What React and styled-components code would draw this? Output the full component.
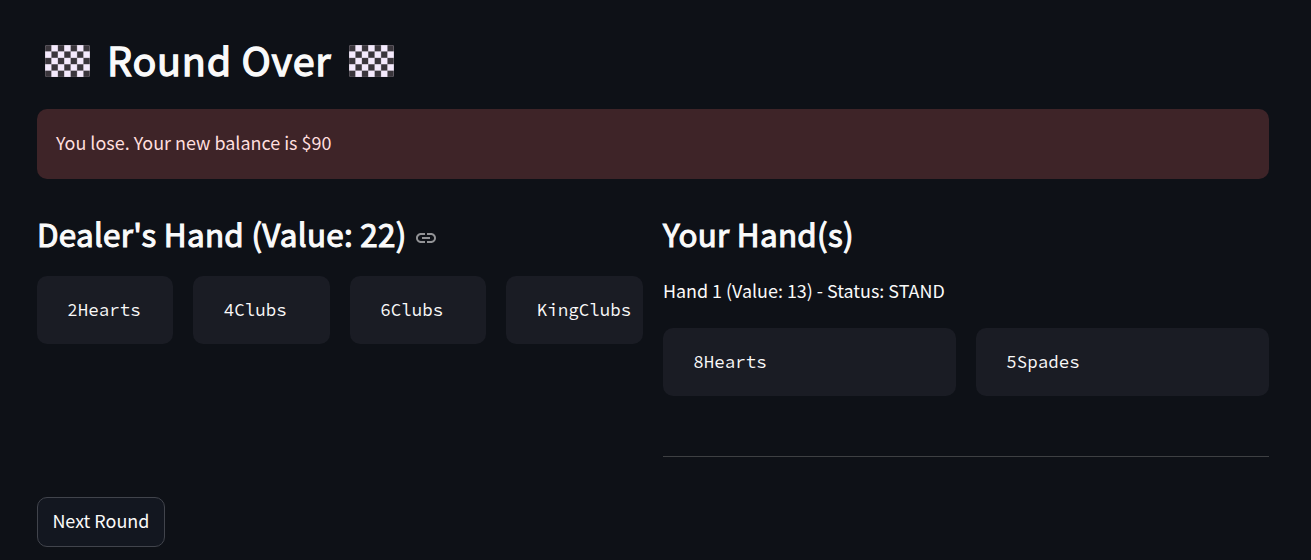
import React from "react";
import styled, { createGlobalStyle } from "styled-components";

const GlobalStyle = createGlobalStyle`
  * { box-sizing: border-box; }
  body {
    margin: 0;
    background: #0e1117;
    color: #fafafa;
    font-family: "Source Sans Pro", "Noto Sans CJK SC", "Noto Sans", sans-serif;
  }
`;

const Page = styled.main`
  width: 1311px;
  height: 560px;
  padding: 36px 42px 0 36.9px;
  overflow: hidden;
`;

const Title = styled.h1`
  display: flex;
  align-items: center;
  height: 53px;
  margin: 0 0 20px;
  padding-left: 8.1px;
  font-size: 39.5px;
  font-weight: 400;
  letter-spacing: 0.75px;
  -webkit-text-stroke: 1.3px currentColor;
  line-height: 53px;
  white-space: nowrap;
`;

const TitleText = styled.span`
  width: 225px;
  margin: -8px 17px 0 17px;
`;

const FlagSvg = styled.svg`
  flex: none;
  width: 45px;
  height: 32px;
  margin-top: -3px;
  border-radius: 2px;
`;

const Alert = styled.div`
  height: 70px;
  padding: 17px 19px;
  border-radius: 10px;
  background: #3e2428;
  color: #ffdede;
  font-size: 17.95px;
  line-height: 32px;
`;

const Columns = styled.div`
  display: grid;
  grid-template-columns: 1fr 1fr;
  gap: 20px;
  height: 278px;
  margin-top: 40px;
`;

const Heading = styled.h2`
  display: flex;
  align-items: center;
  height: 37px;
  margin: 0 0 20px;
  font-size: 31.4px;
  font-weight: 400;
  letter-spacing: 0.28px;
  -webkit-text-stroke: 1.1px currentColor;
  line-height: 37px;
  white-space: nowrap;
`;

const HeadingText = styled.span`
  margin-top: -8px;
`;

const LinkSvg = styled.svg`
  flex: none;
  width: 24px;
  height: 24px;
  margin: 1px 0 0 7px;
`;

const Status = styled.p`
  margin: -2px 0 22px;
  font-size: 17.92px;
  line-height: 32px;
`;

const Cards = styled.div`
  display: grid;
  grid-template-columns: repeat(${(p) => p.$count}, minmax(0, 1fr));
  gap: 20px;
`;

const Card = styled.pre`
  height: 68px;
  margin: 0;
  padding: 20px 0 0 30.4px;
  border-radius: 10px;
  background: #1a1c24;
  font-family: "Source Code Pro", "Noto Sans Mono CJK SC", "Liberation Mono", monospace;
  font-size: 17.5px;
  line-height: 28px;
  white-space: pre;
`;

const Divider = styled.hr`
  height: 1px;
  margin: 60px 0 0;
  border: 0;
  background: #3e4043;
`;

const NextButton = styled.button`
  display: flex;
  align-items: center;
  justify-content: center;
  width: 128px;
  height: 50px;
  padding: 0 0 4px;
  border: 1px solid #41444c;
  border-radius: 10px;
  background: #131720;
  color: #fafafa;
  font-family: inherit;
  font-size: 17.95px;
  white-space: nowrap;
`;

const columns = [0, 1, 2, 3, 4, 5, 6];
const rows = [0, 1, 2, 3, 4];

function Flag() {
  return (
    <FlagSvg viewBox="0 0 45 32">
      <rect width="45" height="32" fill="#a8a1ac" />
      {rows.map((y) =>
        columns.map((x) => (
          <rect
            key={`${x}-${y}`}
            x={x * 6.4 + 0.25}
            y={y * 6.4 + 0.25}
            width="6"
            height="6"
            fill={(x + y) % 2 ? "#f4eafd" : "#3a363c"}
          />
        ))
      )}
    </FlagSvg>
  );
}

function LinkIcon() {
  return (
    <LinkSvg viewBox="0 0 24 24" fill="#929396">
      <path d="M3.9 12c0-1.71 1.39-3.1 3.1-3.1h4V7H7c-2.76 0-5 2.24-5 5s2.24 5 5 5h4v-1.9H7c-1.71 0-3.1-1.39-3.1-3.1zM8 13h8v-2H8v2zm9-6h-4v1.9h4c1.71 0 3.1 1.39 3.1 3.1s-1.39 3.1-3.1 3.1h-4V17h4c2.76 0 5-2.24 5-5s-2.24-5-5-5z" />
    </LinkSvg>
  );
}

function Hand({ cards }) {
  return (
    <Cards $count={cards.length}>
      {cards.map((card) => (
        <Card key={card}>{card}</Card>
      ))}
    </Cards>
  );
}

export default function App() {
  return (
    <Page>
      <GlobalStyle />
      <Title>
        <Flag />
        <TitleText>Round Over</TitleText>
        <Flag />
      </Title>
      <Alert>You lose. Your new balance is $90</Alert>
      <Columns>
        <section>
          <Heading>
            <HeadingText>Dealer's Hand (Value: 22)</HeadingText>
            <LinkIcon />
          </Heading>
          <Hand cards={["2Hearts", "4Clubs", "6Clubs", "KingClubs"]} />
        </section>
        <section>
          <Heading>
            <HeadingText>Your Hand(s)</HeadingText>
          </Heading>
          <Status>Hand 1 (Value: 13) - Status: STAND</Status>
          <Hand cards={["8Hearts", "5Spades"]} />
          <Divider />
        </section>
      </Columns>
      <NextButton>Next Round</NextButton>
    </Page>
  );
}
